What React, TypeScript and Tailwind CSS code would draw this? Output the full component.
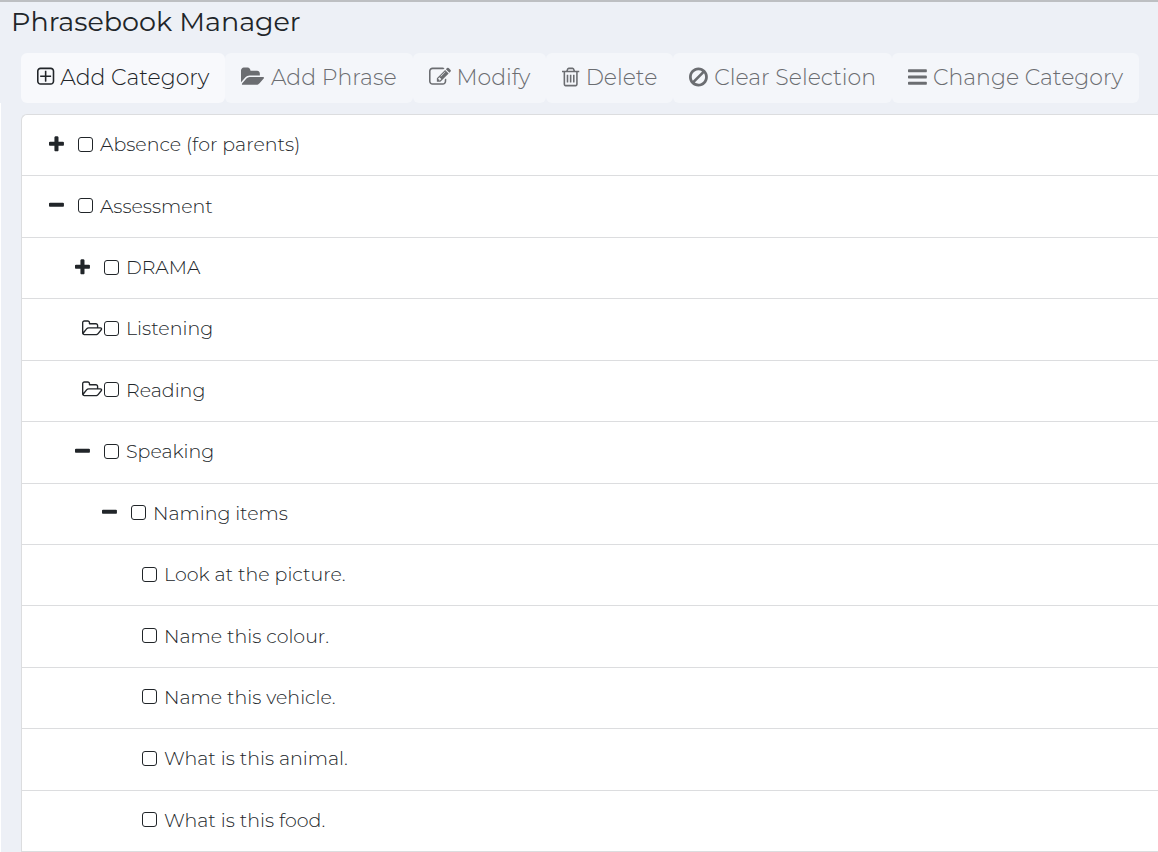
import { useState } from "react";

type Glyph = { viewBox: string; d: string };

const ICONS = {
  plusSquare: {
    viewBox: "192 0 1408 1792",
    d: "M1344 800v64q0 14-9 23t-23 9h-352v352q0 14-9 23t-23 9h-64q-14 0-23-9t-9-23v-352h-352q-14 0-23-9t-9-23v-64q0-14 9-23t23-9h352v-352q0-14 9-23t23-9h64q14 0 23 9t9 23v352h352q14 0 23 9t9 23zm128 448v-832q0-66-47-113t-113-47h-832q-66 0-113 47t-47 113v832q0 66 47 113t113 47h832q66 0 113-47t47-113zm128-832v832q0 119-84.5 203.5t-203.5 84.5h-832q-119 0-203.5-84.5t-84.5-203.5v-832q0-119 84.5-203.5t203.5-84.5h832q119 0 203.5 84.5t84.5 203.5z",
  },
  folderOpen: {
    viewBox: "0 0 1920 1792",
    d: "M1879 952q0 31-31 66l-336 396q-43 51-120.5 86.5t-143.5 35.5h-1088q-34 0-60.5-13t-26.5-43q0-31 31-66l336-396q43-51 120.5-86.5t143.5-35.5h1088q34 0 60.5 13t26.5 43zm-343-344v160h-832q-94 0-197 47.5t-164 119.5l-337 396-5 6q0-4-.5-12.5t-.5-12.5v-960q0-92 66-158t158-66h320q92 0 158 66t66 158v32h544q92 0 158 66t66 158z",
  },
  edit: {
    viewBox: "0 0 1792 1792",
    d: "M888 1184l116-116-152-152-116 116v56h96v96h56zm440-720q-16-16-33 1l-350 350q-17 17-1 33t33-1l350-350q17-17 1-33zm80 594v190q0 119-84.5 203.5t-203.5 84.5h-832q-119 0-203.5-84.5t-84.5-203.5v-832q0-119 84.5-203.5t203.5-84.5h832q63 0 117 25 15 7 18 23 3 17-9 29l-49 49q-14 14-32 8-23-6-45-6h-832q-66 0-113 47t-47 113v832q0 66 47 113t113 47h832q66 0 113-47t47-113v-126q0-13 9-22l64-64q15-15 35-7t20 29zm-96-738l288 288-672 672h-288v-288zm444 132l-92 92-288-288 92-92q28-28 68-28t68 28l152 152q28 28 28 68t-28 68z",
  },
  trash: {
    viewBox: "192 0 1408 1792",
    d: "M704 736v576q0 14-9 23t-23 9h-64q-14 0-23-9t-9-23v-576q0-14 9-23t23-9h64q14 0 23 9t9 23zm256 0v576q0 14-9 23t-23 9h-64q-14 0-23-9t-9-23v-576q0-14 9-23t23-9h64q14 0 23 9t9 23zm256 0v576q0 14-9 23t-23 9h-64q-14 0-23-9t-9-23v-576q0-14 9-23t23-9h64q14 0 23 9t9 23zm128 724v-948h-896v948q0 22 7 40.5t14.5 27 10.5 8.5h832q3 0 10.5-8.5t14.5-27 7-40.5zm-672-1076h448l-48-117q-7-9-17-11h-317q-10 2-17 11zm928 32v64q0 14-9 23t-23 9h-96v948q0 83-47 143.5t-113 60.5h-832q-66 0-113-58.5t-47-141.5v-952h-96q-14 0-23-9t-9-23v-64q0-14 9-23t23-9h309l70-167q15-37 54-63t79-26h320q40 0 79 26t54 63l70 167h309q14 0 23 9t9 23z",
  },
  ban: {
    viewBox: "128 0 1536 1792",
    d: "M1440 893q0-161-87-295l-754 753q137 89 297 89 111 0 211.5-43.5t173.5-116.5 116-174.5 43-212.5zm-999 299l755-754q-135-91-300-91-148 0-273 73t-198 199-73 274q0 162 89 299zm1223-299q0 157-61 300t-163.5 246-245 164-298.5 61-298.5-61-245-164-163.5-246-61-300 61-299.5 163.5-245.5 245-164 298.5-61 298.5 61 245 164 163.5 245.5 61 299.5z",
  },
  bars: {
    viewBox: "128 0 1536 1792",
    d: "M1664 1344v128q0 26-19 45t-45 19h-1408q-26 0-45-19t-19-45v-128q0-26 19-45t45-19h1408q26 0 45 19t19 45zm0-512v128q0 26-19 45t-45 19h-1408q-26 0-45-19t-19-45v-128q0-26 19-45t45-19h1408q26 0 45 19t19 45zm0-512v128q0 26-19 45t-45 19h-1408q-26 0-45-19t-19-45v-128q0-26 19-45t45-19h1408q26 0 45 19t19 45z",
  },
  folderOutline: {
    viewBox: "64 0 1920 1792",
    d: "M1845 931q0-35-53-35h-1088q-40 0-85.5 21.5t-71.5 52.5l-294 363q-18 24-18 40 0 35 53 35h1088q40 0 86-22t71-53l294-363q18-22 18-39zm-1141-163h768v-160q0-40-28-68t-68-28h-576q-40 0-68-28t-28-68v-64q0-40-28-68t-68-28h-320q-40 0-68 28t-28 68v853l256-315q44-53 116-87.5t140-34.5zm1269 163q0 62-46 120l-295 363q-43 53-116 87.5t-140 34.5h-1088q-92 0-158-66t-66-158v-960q0-92 66-158t158-66h320q92 0 158 66t66 158v32h544q92 0 158 66t66 158v160h192q54 0 99 24.5t67 70.5q15 32 15 68z",
  },
  plus: {
    viewBox: "192 0 1408 1792",
    d: "M1600 736v192q0 40-28 68t-68 28h-416v416q0 40-28 68t-68 28h-192q-40 0-68-28t-28-68v-416h-416q-40 0-68-28t-28-68v-192q0-40 28-68t68-28h416v-416q0-40 28-68t68-28h192q40 0 68 28t28 68v416h416q40 0 68 28t28 68z",
  },
  minus: {
    viewBox: "192 0 1408 1792",
    d: "M1600 736v192q0 40-28 68t-68 28h-1216q-40 0-68-28t-28-68v-192q0-40 28-68t68-28h1216q40 0 68 28t28 68z",
  },
} satisfies Record<string, Glyph>;

type IconName = keyof typeof ICONS;

function Icon({ name, className }: { name: IconName; className: string }) {
  const { viewBox, d } = ICONS[name];
  return (
    <svg
      viewBox={viewBox}
      className={`w-auto shrink-0 overflow-visible ${className}`}
      fill="currentColor"
      aria-hidden="true"
    >
      <path d={d} />
    </svg>
  );
}

type Row = {
  id: string;
  label: string;
  level: 0 | 1 | 2 | 3;
  state?: "open" | "closed" | "empty";
};

const ROWS: Row[] = [
  { id: "absence", label: "Absence (for parents)", level: 0, state: "closed" },
  { id: "assessment", label: "Assessment", level: 0, state: "open" },
  { id: "drama", label: "DRAMA", level: 1, state: "closed" },
  { id: "listening", label: "Listening", level: 1, state: "empty" },
  { id: "reading", label: "Reading", level: 1, state: "empty" },
  { id: "speaking", label: "Speaking", level: 1, state: "open" },
  { id: "naming", label: "Naming items", level: 2, state: "open" },
  { id: "picture", label: "Look at the picture.", level: 3 },
  { id: "colour", label: "Name this colour.", level: 3 },
  { id: "vehicle", label: "Name this vehicle.", level: 3 },
  { id: "animal", label: "What is this animal.", level: 3 },
  { id: "food", label: "What is this food.", level: 3 },
];

const INDENT = {
  0: "pl-[27px]",
  1: "pl-[53px]",
  2: "pl-[80px]",
  3: "pl-[120px]",
};

const ACTIONS: { label: string; icon: IconName; always?: boolean }[] = [
  { label: "Add Category", icon: "plusSquare", always: true },
  { label: "Add Phrase", icon: "folderOpen" },
  { label: "Modify", icon: "edit" },
  { label: "Delete", icon: "trash" },
  { label: "Clear Selection", icon: "ban" },
  { label: "Change Category", icon: "bars" },
];

function Toggle({ row }: { row: Row }) {
  if (!row.state) return null;
  if (row.state === "empty") {
    return (
      <span className="flex w-[29px] shrink-0 justify-end pr-0.5 pb-0.5">
        <Icon name="folderOutline" className="h-[19px]" />
      </span>
    );
  }
  const open = row.state === "open";
  return (
    <button
      type="button"
      aria-expanded={open}
      aria-label={`${open ? "Collapse" : "Expand"} ${row.label}`}
      className="flex w-[29px] shrink-0 cursor-pointer pb-0.5"
    >
      <Icon name={open ? "minus" : "plus"} className="h-[19px]" />
    </button>
  );
}

export default function App() {
  const [selected, setSelected] = useState<string[]>([]);

  function toggle(id: string) {
    setSelected((prev) =>
      prev.includes(id) ? prev.filter((x) => x !== id) : [...prev, id]
    );
  }

  return (
    <main className="flex min-h-screen flex-col overflow-x-hidden border-t-2 border-[#bdbfc2] bg-[#edf0f6] font-['Montserrat','Inter',sans-serif] text-[#212529]">
      <h1 className="px-[11px] text-[27px] leading-10">Phrasebook Manager</h1>

      <div className="mt-[11px] flex px-[21px]" role="toolbar" aria-label="Phrases">
        {ACTIONS.map((action) => (
          <button
            key={action.label}
            type="button"
            disabled={!action.always && selected.length === 0}
            onClick={
              action.icon === "ban" ? () => setSelected([]) : undefined
            }
            className="flex h-[50px] shrink-0 items-center gap-1.5 rounded-md bg-[#f8f9fc] px-4 pb-0.5 text-[22px] font-light whitespace-nowrap disabled:bg-[#f4f6fa] disabled:text-[#6b6d71]"
          >
            <Icon name={action.icon} className="h-[22px]" />
            {action.label}
          </button>
        ))}
      </div>

      <div className="flex flex-1 border-l border-white pt-[11px] pl-5">
        <ul className="grid flex-1 auto-rows-fr rounded-tl-md border-t border-l border-[#dcdddf] bg-white">
          {ROWS.map((row) => (
            <li
              key={row.id}
              className={`flex min-h-14 items-center border-b border-[#dcdddf] ${INDENT[row.level]}`}
            >
              <Toggle row={row} />
              <label className="flex items-center gap-[7px] text-[19px] leading-7 font-light">
                <input
                  type="checkbox"
                  checked={selected.includes(row.id)}
                  onChange={() => toggle(row.id)}
                  className="mb-0.5 size-[15px] shrink-0 appearance-none rounded-[3px] border border-[#212529] checked:bg-[#212529]"
                />
                {row.label}
              </label>
            </li>
          ))}
        </ul>
      </div>
    </main>
  );
}
